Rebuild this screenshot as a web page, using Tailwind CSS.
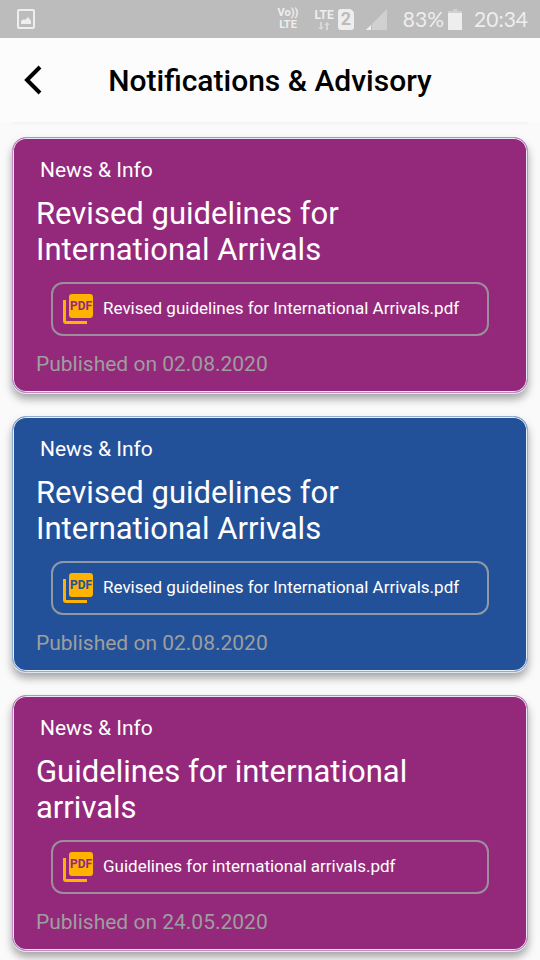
<!DOCTYPE html>
<html lang="en">
<head>
<meta charset="utf-8">
<meta name="viewport" content="width=device-width, initial-scale=1">
<title>Notifications &amp; Advisory</title>
<script src="https://cdn.jsdelivr.net/npm/@tailwindcss/browser@4"></script>
</head>
<body class="h-screen overflow-hidden bg-[#fafafa] font-[Roboto,sans-serif]">
<svg class="hidden" aria-hidden="true">
  <symbol id="pdf" viewBox="0 0 30 30">
    <path fill="#ffb300" d="M9 0h18a3 3 0 0 1 3 3v18a3 3 0 0 1-3 3H9a3 3 0 0 1-3-3V3a3 3 0 0 1 3-3ZM0 6h3v21h21v3H3a3 3 0 0 1-3-3Z"/>
    <text x="18" y="16" text-anchor="middle" font-size="12" font-weight="700" fill="currentColor">PDF</text>
  </symbol>
</svg>
<div class="flex h-[38px] items-center bg-[#bcbcbc] pr-3 pl-4 text-[#eeeeee]">
  <svg class="size-5" viewBox="0 0 20 20" fill="none" aria-label="Picture"><rect x="2" y="1" width="16" height="18" rx="1" stroke="currentColor" stroke-width="2"/><path fill="currentColor" d="M5 15v-3l3-2 1 1 3-3 3 4v3Z"/></svg>
  <div class="ml-auto flex items-center">
    <div class="mr-4 text-center text-[11px] leading-3 font-bold"><div>Vo))</div><div>LTE</div></div>
    <div class="mr-1 flex flex-col items-center text-[12px] leading-[14px] font-bold">LTE
      <svg class="h-2 w-3 text-[#d8d8d8]" viewBox="0 0 12 8" fill="currentColor"><path d="M2 0h2v5h2L3 8 0 5h2ZM8 8h2V3h2L9 0 6 3h2Z"/></svg>
    </div>
    <div class="mr-3 flex h-[21px] w-4 items-center justify-center rounded-[3px] rounded-tr-[5px] bg-[#eeeeee] text-[18px] leading-5 font-bold text-[#bcbcbc]">2</div>
    <svg class="mr-4 size-[21px]" viewBox="0 0 21 21" aria-label="Signal"><path fill="#d0d0d0" d="M21 0v21H0Z"/><path fill="#eeeeee" d="M5 16v5H0Z"/><path stroke="#bcbcbc" d="M5.500 15v6"/></svg>
    <span class="mr-1 font-[Lato,sans-serif] text-[21px] leading-6">83%</span>
    <svg class="mr-3 h-[21px] w-[14px]" viewBox="0 0 14 21" aria-label="Battery"><path fill="#d0d0d0" d="M5 0h4v2h5v3H0V2h5Z"/><path fill="#eeeeee" d="M0 4h14v17H0Z"/></svg>
    <span class="font-[Lato,sans-serif] text-[21px] leading-6">20:34</span>
  </div>
</div>
<header class="grid h-[84px] grid-cols-[64px_1fr_64px] items-center bg-[#fcfcfc]">
  <button type="button" aria-label="Back" class="pl-6">
    <svg class="h-[30px] w-[18px]" viewBox="0 0 18 30" fill="none" stroke="#000" stroke-width="4"><path d="M16 2 3 15l13 13"/></svg>
  </button>
  <h1 class="pt-0.5 text-center text-[30px] leading-9 font-medium whitespace-nowrap text-black">Notifications &amp; Advisory</h1>
</header>
<div class="mx-3 h-[15px] bg-linear-to-b from-[#f3f3f3] to-[#fafafa] to-30%"></div>
<main class="flex flex-col gap-[23px] px-3">
  <article class="rounded-[14px] border border-[#c18bc0] bg-[#94297c] px-[23px] pt-5 pb-4 text-white shadow-[inset_0_0_0_1px_#e6e6f7,0_1px_0_#dfe6f2,0_6px_8px_rgba(0,0,0,0.35)]">
    <p class="pl-1 text-[21px] leading-6">News &amp; Info</p>
    <h2 class="mt-[14px] text-[31px] leading-9">Revised guidelines for<br>International Arrivals</h2>
    <a href="#" class="mx-[15px] mt-[14px] flex h-[54px] items-center gap-[10px] rounded-[12px] border-2 border-[#9b8f9b] px-[10px] text-[17px] leading-5">
      <svg class="size-[30px] shrink-0 text-[#94297c]"><use href="#pdf"/></svg><span class="pb-0.5">Revised guidelines for International Arrivals.pdf</span></a>
    <p class="mt-4 text-[21px] leading-6 text-[#9e9e9e]">Published on 02.08.2020</p>
  </article>
  <article class="rounded-[14px] border border-[#8fabd0] bg-[#235199] px-[23px] pt-5 pb-4 text-white shadow-[inset_0_0_0_1px_#e6eef7,0_1px_0_#dfe6f2,0_6px_8px_rgba(0,0,0,0.35)]">
    <p class="pl-1 text-[21px] leading-6">News &amp; Info</p>
    <h2 class="mt-[14px] text-[31px] leading-9">Revised guidelines for<br>International Arrivals</h2>
    <a href="#" class="mx-[15px] mt-[14px] flex h-[54px] items-center gap-[10px] rounded-[12px] border-2 border-[#8f99a5] px-[10px] text-[17px] leading-5">
      <svg class="size-[30px] shrink-0 text-[#235199]"><use href="#pdf"/></svg><span class="pb-0.5">Revised guidelines for International Arrivals.pdf</span></a>
    <p class="mt-4 text-[21px] leading-6 text-[#9e9e9e]">Published on 02.08.2020</p>
  </article>
  <article class="rounded-[14px] border border-[#c18bc0] bg-[#94297c] px-[23px] pt-5 pb-4 text-white shadow-[inset_0_0_0_1px_#e6e6f7,0_1px_0_#dfe6f2,0_6px_8px_rgba(0,0,0,0.35)]">
    <p class="pl-1 text-[21px] leading-6">News &amp; Info</p>
    <h2 class="mt-[14px] text-[31px] leading-9">Guidelines for international<br>arrivals</h2>
    <a href="#" class="mx-[15px] mt-[14px] flex h-[54px] items-center gap-[10px] rounded-[12px] border-2 border-[#9b8f9b] px-[10px] text-[17px] leading-5">
      <svg class="size-[30px] shrink-0 text-[#94297c]"><use href="#pdf"/></svg><span class="pb-0.5">Guidelines for international arrivals.pdf</span></a>
    <p class="mt-4 text-[21px] leading-6 text-[#9e9e9e]">Published on 24.05.2020</p>
  </article>
</main>
</body>
</html>
